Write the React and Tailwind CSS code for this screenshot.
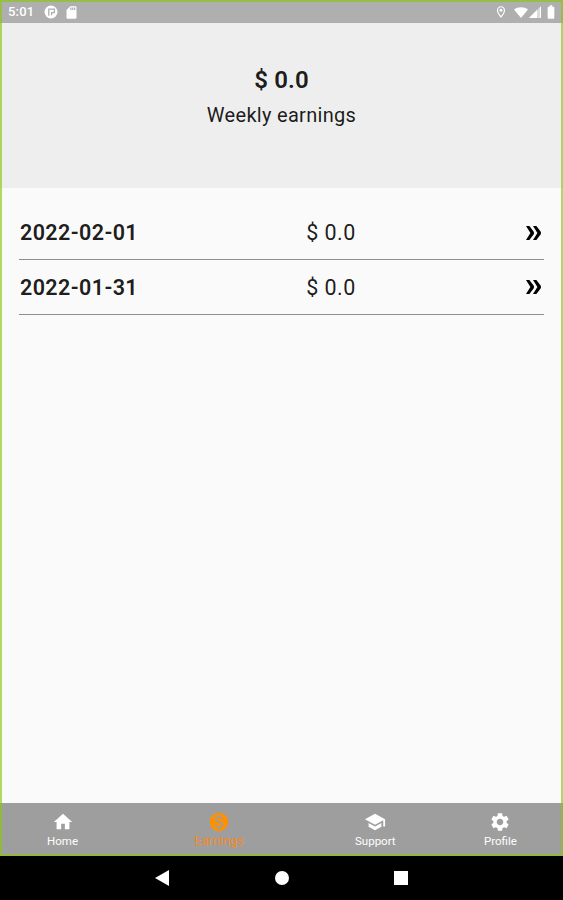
import {
  MdBatteryFull,
  MdHome,
  MdMonetizationOn,
  MdOutlineLocationOn,
  MdSchool,
  MdSdCard,
  MdSettings,
} from "react-icons/md";

const earnings = [
  { date: "2022-02-01", amount: "$ 0.0" },
  { date: "2022-01-31", amount: "$ 0.0" },
];

const tabs = [
  { label: "Home", icon: MdHome },
  { label: "Earnings", icon: MdMonetizationOn, active: true },
  { label: "Support", icon: MdSchool },
  { label: "Profile", icon: MdSettings },
];

function StatusBar() {
  return (
    <div className="flex h-[23px] items-center bg-[#afafaf] pl-2 pr-1 pt-px text-white">
      <span className="text-[13px] font-medium tracking-[0.2px]">5:01</span>
      <svg viewBox="0 0 14 14" className="ml-[10px] size-[14px]">
        <circle cx="7" cy="7" r="6.5" fill="currentColor" />
        <path d="M4.8 10.8V4.2h5.6v3.4H7.6v2.6" fill="none" stroke="#afafaf" strokeWidth="1.3" />
      </svg>
      <MdSdCard className="ml-[6px] size-[15px]" />
      <MdOutlineLocationOn className="ml-auto size-[14px]" />
      <svg viewBox="0 0 14 11" className="ml-[6px] h-[11px] w-[14px]">
        <path d="M0 2.5C4 -0.6 10 -0.6 14 2.5L7 11Z" fill="currentColor" />
      </svg>
      <svg viewBox="0 0 12 12" className="ml-px size-3">
        <path d="M0 12 12 0V12Z" fill="currentColor" fillOpacity="0.55" />
        <path d="M0 12 8 4V12Z" fill="currentColor" />
        <path d="M11.5 1V12" stroke="currentColor" />
      </svg>
      <MdBatteryFull className="ml-[2px] size-4" />
    </div>
  );
}

function DoubleChevron() {
  return (
    <svg viewBox="0 0 15 14" className="mb-px mr-[3px] h-[14px] w-[15px]">
      <path
        d="M0 0H3.4L7.6 5.6Q8.4 7 7.6 8.4L3.4 14H0L4.4 7ZM7 0H10.4L14.6 5.6Q15.4 7 14.6 8.4L10.4 14H7L11.4 7Z"
        fill="#000"
      />
    </svg>
  );
}

function EarningRow({ date, amount }) {
  return (
    <li className="flex h-[54.5px] items-center justify-between whitespace-nowrap border-b border-[#8e8e8e] pt-[2px] text-black/90">
      <span className="w-[120px] pl-px text-[21.5px] font-semibold tracking-[0.4px]">{date}</span>
      <span className="mr-[3px] text-[21.5px] tracking-[0.4px]">{amount}</span>
      <DoubleChevron />
    </li>
  );
}

function TabBar() {
  return (
    <nav className="flex h-[53px] bg-[#9e9e9e]">
      {tabs.map(({ label, icon: Icon, active }) => (
        <div
          key={label}
          className={
            active
              ? "flex flex-[1.5] flex-col items-center pt-2 text-[#ff9100]"
              : "flex flex-1 flex-col items-center pt-2 text-white"
          }
        >
          <Icon className="size-[22px]" />
          <span
            className={
              active
                ? "text-[12.8px] leading-[15px] text-[#f58a1f]"
                : "text-[11.5px] leading-[17px]"
            }
          >
            {label}
          </span>
        </div>
      ))}
    </nav>
  );
}

function SystemNav() {
  return (
    <div className="flex h-11 items-center justify-center gap-[105px] bg-black">
      <svg viewBox="0 0 14 16" className="-ml-px h-4 w-[14px]">
        <path d="M14 0V16L0 8Z" fill="#fff" />
      </svg>
      <span className="ml-px size-[14px] rounded-full bg-white" />
      <span className="size-[14px] bg-white" />
    </div>
  );
}

export default function App() {
  return (
    <div className="flex h-[900px] w-[563px] flex-col overflow-hidden font-['Roboto',sans-serif]">
      <div className="relative flex flex-1 flex-col bg-[#fafafa]">
        <StatusBar />
        <header className="flex h-[165px] flex-col items-center bg-[#eeeeee] pt-[42px] text-black/90">
          <h1 className="text-2xl font-semibold leading-[30px] tracking-[0.1px]">$ 0.0</h1>
          <p className="mt-[5px] text-xl leading-[30px] tracking-[0.3px]">Weekly earnings</p>
        </header>
        <ul className="flex-1 px-[19px] pt-[17.5px]">
          {earnings.map((row) => (
            <EarningRow key={row.date} {...row} />
          ))}
        </ul>
        <TabBar />
        {/* borde verde translúcido del marco */}
        <div className="pointer-events-none absolute inset-0 border-2 border-[#8ec412]/65" />
      </div>
      <SystemNav />
    </div>
  );
}
